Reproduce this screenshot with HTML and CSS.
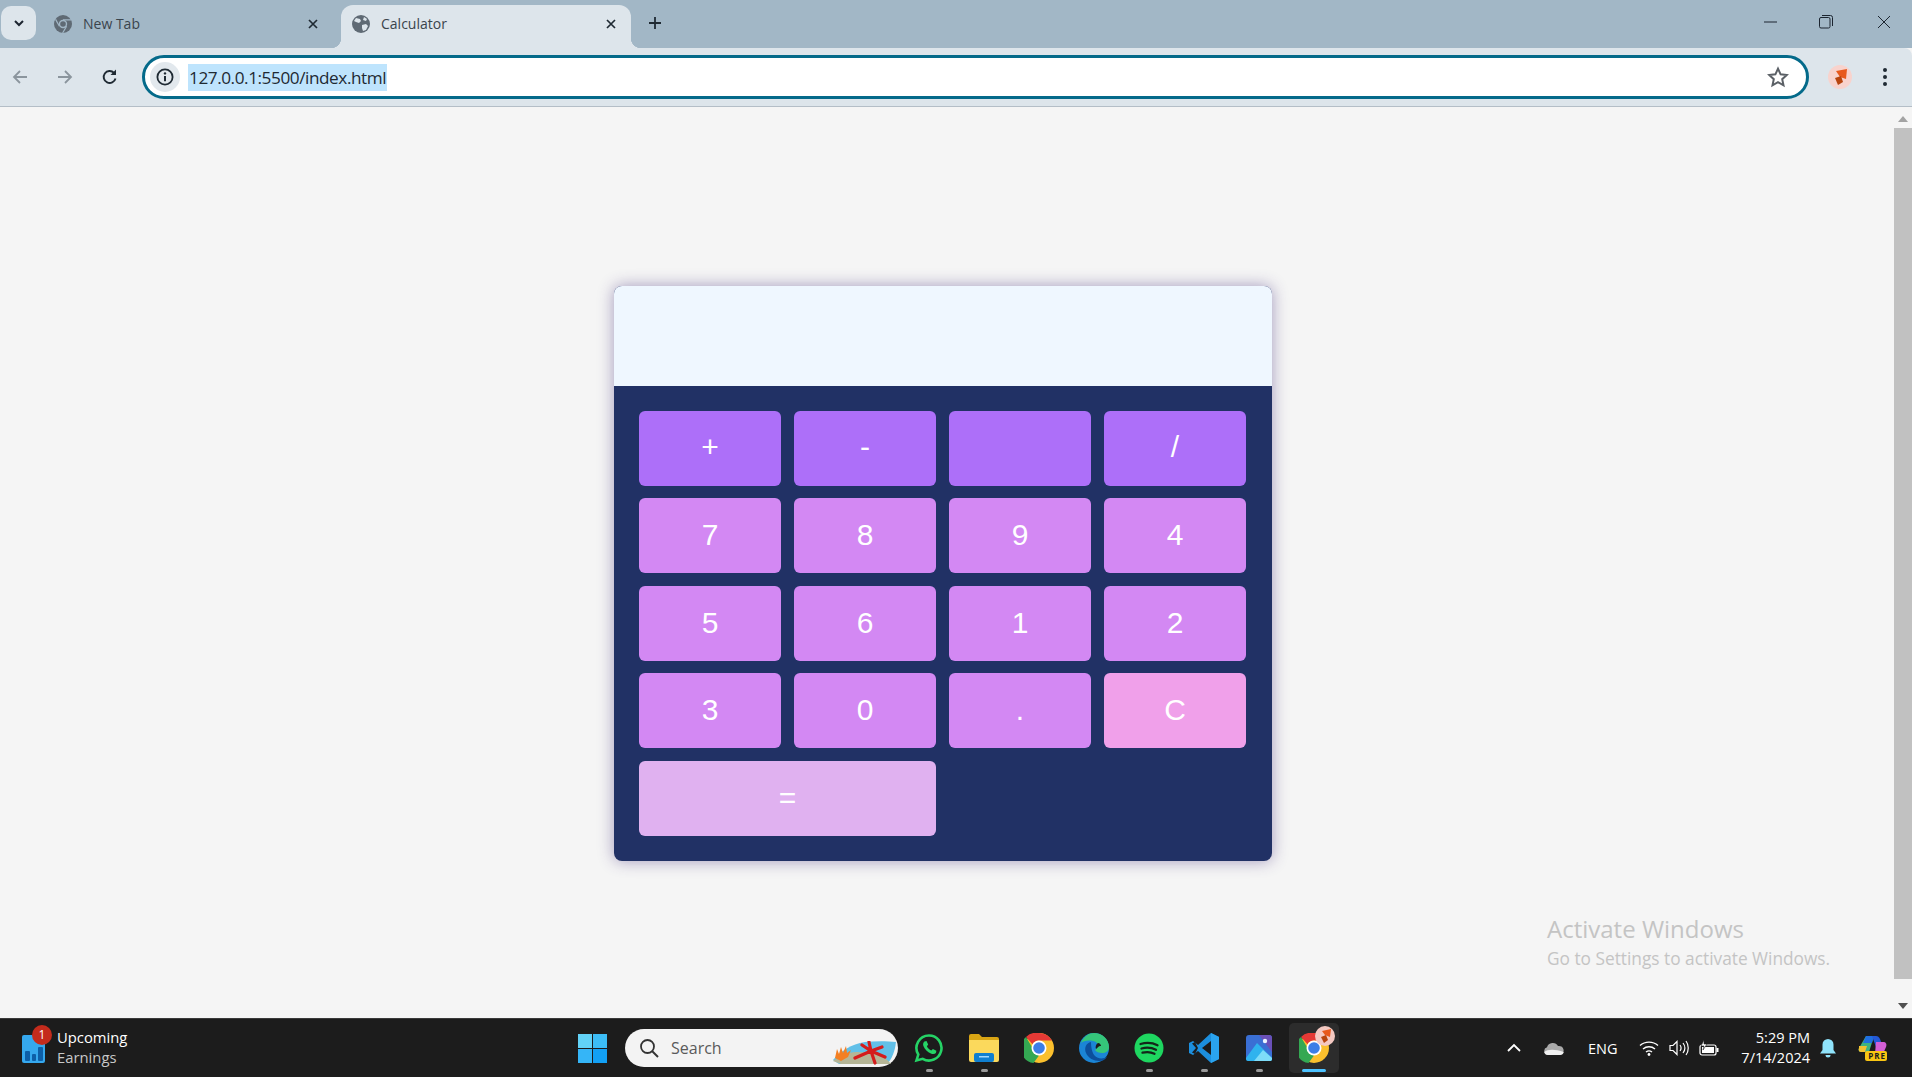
FILE: index.html
```html
<!DOCTYPE html>
<html lang="en">
<head>
    <meta charset="UTF-8">
    <meta name="viewport" content="width=device-width, initial-scale=1.0">
    <title>Calculator</title>
    <link rel="stylesheet" href="styles.css">
</head>
<body>
    <!-- Browser tabs -->
    <header class="tabstrip">
        <div class="tab-search">
            <svg width="14" height="14" viewBox="0 0 14 14"><path d="M3 5l4 4 4-4" fill="none" stroke="#1c2530" stroke-width="2"/></svg>
        </div>
        <div class="tab">
            <svg class="favicon" width="18" height="18" viewBox="0 0 18 18">
                <circle cx="9" cy="9" r="9" fill="#5f6a74"/>
                <circle cx="9" cy="9" r="4.2" fill="#a2b7c6"/>
                <circle cx="9" cy="9" r="2.8" fill="#5f6a74"/>
                <path d="M9 4.8h8M5.4 11.2L1.6 4.4M12.6 11.2L8.6 18" stroke="#a2b7c6" stroke-width="1.2"/>
            </svg>
            <span class="tab-title">New Tab</span>
            <svg class="tab-close" width="12" height="12" viewBox="0 0 12 12"><path d="M2 2l8 8M10 2l-8 8" stroke="#1f2a33" stroke-width="1.7"/></svg>
        </div>
        <div class="tab tab-active">
            <svg class="favicon" width="18" height="18" viewBox="0 0 18 18">
                <circle cx="9" cy="9" r="9" fill="#5f6a74"/>
                <path d="M4 3l4 1 1 2-2 2-3-1-2-1zM10 10l4-1 2 2-2 4-3 1-1-3zM12 2l3 2-1 2-3-1z" fill="#dde5eb"/>
            </svg>
            <span class="tab-title">Calculator</span>
            <svg class="tab-close" width="12" height="12" viewBox="0 0 12 12"><path d="M2 2l8 8M10 2l-8 8" stroke="#1f2a33" stroke-width="1.7"/></svg>
        </div>
        <svg class="new-tab" width="14" height="14" viewBox="0 0 14 14"><path d="M7 1v12M1 7h12" stroke="#1f2a33" stroke-width="1.8"/></svg>
        <div class="window-controls">
            <svg width="14" height="14" viewBox="0 0 14 14"><path d="M0 7h13" stroke="#1c2530" stroke-width="1"/></svg>
            <svg class="win-restore" width="14" height="14" viewBox="0 0 14 14"><rect x="0.5" y="2.5" width="10.5" height="10.5" rx="1.5" fill="none" stroke="#1c2530"/><path d="M3 .5h8.5a2 2 0 0 1 2 2V11" fill="none" stroke="#1c2530"/></svg>
            <svg class="win-close" width="14" height="14" viewBox="0 0 14 14"><path d="M1 1l12 12M13 1L1 13" stroke="#1c2530" stroke-width="1"/></svg>
        </div>
    </header>

    <!-- Address bar -->
    <nav class="toolbar">
        <svg class="nav-icon" width="18" height="18" viewBox="0 0 18 18"><path d="M16 9H3M9 3L3 9l6 6" fill="none" stroke="#8b959d" stroke-width="1.8"/></svg>
        <svg class="nav-icon" width="18" height="18" viewBox="0 0 18 18"><path d="M2 9h13M9 3l6 6-6 6" fill="none" stroke="#8b959d" stroke-width="1.8"/></svg>
        <svg class="nav-icon" width="18" height="18" viewBox="0 0 18 18"><path d="M14.5 10.5A6 6 0 1 1 13 4.8" fill="none" stroke="#1f2a33" stroke-width="1.9"/><path d="M15 1.5V7H9.5z" fill="#1f2a33"/></svg>
        <div class="omnibox">
            <div class="site-info">
                <svg width="18" height="18" viewBox="0 0 18 18"><circle cx="9" cy="9" r="7.6" fill="none" stroke="#1f2a33" stroke-width="1.8"/><path d="M9 8v5.2" stroke="#1f2a33" stroke-width="2"/><circle cx="9" cy="5.4" r="1.2" fill="#1f2a33"/></svg>
            </div>
            <span class="url">127.0.0.1:5500/index.html</span>
            <svg class="star" width="22" height="22" viewBox="0 0 22 22"><path d="M11 2.6l2.6 5.7 6.2.7-4.6 4.2 1.3 6.1-5.5-3.1-5.5 3.1 1.3-6.1L2.2 9l6.2-.7z" fill="none" stroke="#5b6066" stroke-width="2"/></svg>
        </div>
        <svg class="avatar" width="24" height="24" viewBox="0 0 24 24">
            <circle cx="12" cy="12" r="12" fill="#f8d3cd"/>
            <path d="M8 6l11-2-1 10-6-2z" fill="#e8591c"/>
            <path d="M7 13l6-2 2 6-5 3z" fill="#b8450f"/>
        </svg>
        <svg class="menu-dots" width="6" height="20" viewBox="0 0 6 20"><circle cx="3" cy="3" r="2" fill="#1f2a33"/><circle cx="3" cy="10" r="2" fill="#1f2a33"/><circle cx="3" cy="17" r="2" fill="#1f2a33"/></svg>
    </nav>

    <!-- Page -->
    <div class="viewport">
        <main class="page">
            <div class="calculator">
                <div class="display"></div>
                <div class="keys">
                    <button class="key key-op">+</button>
                    <button class="key key-op">-</button>
                    <button class="key key-op"></button>
                    <button class="key key-op">/</button>
                    <button class="key">7</button>
                    <button class="key">8</button>
                    <button class="key">9</button>
                    <button class="key">4</button>
                    <button class="key">5</button>
                    <button class="key">6</button>
                    <button class="key">1</button>
                    <button class="key">2</button>
                    <button class="key">3</button>
                    <button class="key">0</button>
                    <button class="key">.</button>
                    <button class="key key-clear">C</button>
                    <button class="key key-equals">=</button>
                </div>
            </div>
            <div class="watermark">
                <div class="watermark-title">Activate Windows</div>
                <div class="watermark-text">Go to Settings to activate Windows.</div>
            </div>
        </main>
        <div class="scrollbar">
            <svg width="10" height="6" viewBox="0 0 10 6"><path d="M5 0l5 6H0z" fill="#a3a3a3"/></svg>
            <div class="scroll-thumb"></div>
            <svg width="10" height="6" viewBox="0 0 10 6"><path d="M0 0h10L5 6z" fill="#505050"/></svg>
        </div>
    </div>

    <!-- Taskbar -->
    <footer class="taskbar">
        <div class="widget">
            <div class="widget-icon">
                <svg width="23" height="29" viewBox="0 0 23 29">
                    <rect width="23" height="28" y="1" rx="2" fill="#35a8ee"/>
                    <rect x="3" y="17" width="5" height="10" rx="1" fill="#0d5fa8"/>
                    <rect x="10" y="20" width="4" height="7" rx="1" fill="#0d5fa8"/>
                    <rect x="16" y="13" width="5" height="14" rx="1" fill="#0d5fa8"/>
                </svg>
                <span class="badge">1</span>
            </div>
            <div class="widget-text">
                <div class="widget-title">Upcoming</div>
                <div class="widget-sub">Earnings</div>
            </div>
        </div>

        <svg class="start" width="29" height="29" viewBox="0 0 29 29">
            <rect width="14" height="14" fill="#62d2f7"/>
            <rect x="15" width="14" height="14" fill="#3cbdf6"/>
            <rect y="15" width="14" height="14" fill="#35b5f7"/>
            <rect x="15" y="15" width="14" height="14" fill="#12a0f5"/>
        </svg>

        <div class="search">
            <svg width="20" height="20" viewBox="0 0 20 20"><circle cx="8.5" cy="8.5" r="6.5" fill="none" stroke="#333" stroke-width="1.8"/><path d="M13 13l6 6" stroke="#333" stroke-width="2"/></svg>
            <span class="search-label">Search</span>
            <svg class="search-art" width="64" height="24" viewBox="0 0 64 24">
                <path d="M0 19C8 10 18 3 32 1c10-1 22-1 31 0-1 9-4 17-9 22H6z" fill="#62c0e8"/>
                <path d="M0 20c6-5 14-9 24-9 14 0 28 3 34 12H8z" fill="#b5b596"/>
                <path d="M2 17l2-9 2 5 2-7 2 6 3-7 1 7 4-3-3 7-7 4z" fill="#f47f22"/>
                <path d="M38 10L36 1M38 10l11-4M38 10L22 17M38 10l14 6M38 10l4 12M38 10l-9-6" stroke="#d41c1c" stroke-width="3.200" stroke-linecap="round"/>
            </svg>
        </div>

        <div class="apps">
            <div class="app app-open">
                <svg width="30" height="30" viewBox="0 0 30 30">
                    <path d="M15 2.500a12.500 12.500 0 0 0-10.700 19L2.500 27.500l6.200-1.700A12.500 12.500 0 1 0 15 2.500z" fill="none" stroke="#25d366" stroke-width="2.600"/>
                    <path d="M10.500 8.500l2-.5 1.700 3.600-1.300 1.600c1 2 2.400 3.300 4.400 4.300l1.600-1.400 3.500 1.700-.5 2.200c-1 1.100-3 1.400-5 .5-3.500-1.500-6-4-7.500-7.500-.7-2-.2-3.700 1.600-5z" fill="#25d366"/>
                </svg>
            </div>
            <div class="app app-open">
                <svg width="30" height="30" viewBox="0 0 30 30">
                    <path d="M0 3a2 2 0 0 1 2-2h8l3 3h15a2 2 0 0 1 2 2v4H0z" fill="#d9a514"/>
                    <path d="M0 7h30v20a2 2 0 0 1-2 2H2a2 2 0 0 1-2-2z" fill="#fbd95c"/>
                    <rect x="5" y="20" width="20" height="9" rx="2" fill="#0f7fd0"/>
                    <rect x="10" y="23" width="10" height="1.500" fill="#9fd8ff"/>
                </svg>
            </div>
            <div class="app">
                <svg class="chrome" width="30" height="30" viewBox="0 0 30 30">
                    <circle cx="15" cy="15" r="15" fill="#fbc02d"/>
                    <path d="M15 0a15 15 0 0 1 13 7.500H15a7.500 7.500 0 0 0-6.500 3.750L2 3.900A15 15 0 0 1 15 0z" fill="#e53935"/>
                    <path d="M2 3.900l6.500 11.100a7.500 7.500 0 0 0 6.500 7.500L9.500 30A15 15 0 0 1 2 3.900z" fill="#34a853"/>
                    <circle cx="15" cy="15" r="7.500" fill="#fff"/>
                    <circle cx="15" cy="15" r="5.800" fill="#3c7ee6"/>
                </svg>
            </div>
            <div class="app">
                <svg width="30" height="30" viewBox="0 0 30 30">
                    <circle cx="15" cy="15" r="15" fill="#1b85d6"/>
                    <path d="M2 10C5 3 10 0 15 0c8 0 15 6 15 14 0 4-3 6-7 6-3 0-6-1-7-3 4-2 4-8-2-9C9 7 4 8 2 10z" fill="#35c67a"/>
                    <path d="M12 9c-5 1-7 6-5 11 2 5 8 8 13 8 3 0 6-1 8-4-4 2-9 2-12-1-3-3-4-9-4-14z" fill="#0c4f9c"/>
                    <path d="M17 16c-1-2 0-5 2-6 2 0 3 2 3 3-2-.5-3 1-5 3z" fill="#1c1c1c"/>
                </svg>
            </div>
            <div class="app app-open">
                <svg width="30" height="30" viewBox="0 0 30 30">
                    <circle cx="15" cy="15" r="14.500" fill="#1ed760"/>
                    <path d="M6.500 11c6-1.700 12-1.300 17 1.200M7.500 15.500c5-1.300 10-1 14.500 1.300M8.500 19.700c4.300-1 8.500-.7 12 1.100" fill="none" stroke="#14261a" stroke-width="2.300" stroke-linecap="round"/>
                </svg>
            </div>
            <div class="app app-open">
                <svg width="30" height="30" viewBox="0 0 30 30">
                    <path d="M22 0l8 4v22l-8 4-13-12-5 4-4-2v-10l4-2 5 4z" fill="#1c8fde"/>
                    <path d="M22 8l-9 7 9 7z" fill="#1c1c1c"/>
                    <path d="M22 0l8 4v22l-8 4z" fill="#2aa3ee"/>
                    <path d="M3 10.500l3-1.500 3 6-3 6-3-1.500 4-4.500z" fill="#1c1c1c"/>
                </svg>
            </div>
            <div class="app app-open">
                <svg width="28" height="28" viewBox="0 0 28 28">
                    <rect width="26" height="26" x="1" y="1" rx="3" fill="#3a6fd4"/>
                    <path d="M14 1h10a3 3 0 0 1 3 3v14z" fill="#6a50b8"/>
                    <path d="M1 24l11-15 15 15v1a2 2 0 0 1-2 2H3a2 2 0 0 1-2-2z" fill="#2fb3ee"/>
                    <path d="M9 27l9-11 9 8v1a2 2 0 0 1-2 2z" fill="#7edcf8"/>
                    <circle cx="20" cy="7" r="2.200" fill="#eaf4ff"/>
                </svg>
            </div>
            <div class="app app-active">
                <svg class="chrome" width="30" height="30" viewBox="0 0 30 30">
                    <circle cx="15" cy="15" r="15" fill="#fbc02d"/>
                    <path d="M15 0a15 15 0 0 1 13 7.500H15a7.500 7.500 0 0 0-6.500 3.750L2 3.900A15 15 0 0 1 15 0z" fill="#e53935"/>
                    <path d="M2 3.900l6.500 11.100a7.500 7.500 0 0 0 6.500 7.500L9.500 30A15 15 0 0 1 2 3.900z" fill="#34a853"/>
                    <circle cx="15" cy="15" r="7.500" fill="#fff"/>
                    <circle cx="15" cy="15" r="5.800" fill="#3c7ee6"/>
                </svg>
                <svg class="app-overlay" width="20" height="20" viewBox="0 0 20 20">
                    <circle cx="10" cy="10" r="10" fill="#f4c9c2"/>
                    <path d="M7 5l9-2-1 8-5-2z" fill="#e8591c"/>
                    <path d="M6 11l5-2 2 5-4 3z" fill="#b8450f"/>
                </svg>
            </div>
        </div>

        <div class="tray">
            <svg class="tray-chevron" width="14" height="14" viewBox="0 0 14 14"><path d="M1 10l6-6 6 6" fill="none" stroke="#fff" stroke-width="1.800"/></svg>
            <svg class="tray-cloud" width="20" height="13" viewBox="0 0 20 13"><path d="M4 13a4 4 0 0 1-1-7.800A6 6 0 0 1 14 4a4.500 4.500 0 0 1 2 9z" fill="#a9a9a9"/><path d="M4 13a4 4 0 0 1-3.800-3C4 7 11 7 19.800 10a4 4 0 0 1-3.800 3z" fill="#f0f0f0"/></svg>
            <span class="tray-lang">ENG</span>
            <svg class="tray-wifi" width="20" height="16" viewBox="0 0 20 16"><path d="M1 5.500c5-4.500 13-4.500 18 0M4 9c3.500-3 8.500-3 12 0M7 12c1.700-1.300 4.300-1.300 6 0" fill="none" stroke="#fff" stroke-width="1.400"/><circle cx="10" cy="14.500" r="1.400" fill="#fff"/></svg>
            <svg class="tray-volume" width="20" height="16" viewBox="0 0 20 16"><path d="M1 5.500h3l4-4v13l-4-4H1z" fill="none" stroke="#fff" stroke-width="1.200"/><path d="M11 5c1.300 1.800 1.300 4.200 0 6M14 3c2.300 3 2.300 7 0 10M17 1c3 4 3 10 0 14" fill="none" stroke="#fff" stroke-width="1.200"/></svg>
            <svg class="tray-battery" width="20" height="16" viewBox="0 0 20 16"><rect x="1" y="5" width="16" height="10" rx="2" fill="#1c1c1c" stroke="#fff" stroke-width="1.200"/><rect x="3" y="7" width="12" height="6" fill="#fff"/><rect x="17.500" y="8" width="2" height="4" fill="#fff"/><path d="M5 0L2 6h3l-1 4 4-6H5z" fill="#fff" stroke="#1c1c1c" stroke-width=".6"/></svg>
            <div class="clock">
                <div>5:29 PM</div>
                <div>7/14/2024</div>
            </div>
            <svg class="tray-bell" width="16" height="19" viewBox="0 0 16 19"><path d="M8 0a5.500 5.500 0 0 0-5.500 5.500V11L0 14.500h16L13.500 11V5.500A5.500 5.500 0 0 0 8 0z" fill="#8fe3fb"/><path d="M5.500 16h5a2.500 2.500 0 0 1-5 0z" fill="#8fe3fb"/></svg>
            <div class="copilot">
                <svg width="29" height="26" viewBox="0 0 29 26">
                    <path d="M8 1h8L11 17H3C1 17 0 15 1 13z" fill="#3fb37f"/>
                    <path d="M8 1h8l-2 7H5z" fill="#1f6fe0"/>
                    <path d="M14 1h4c2 0 3 1 4 3l3 8h-7z" fill="#2459d8"/>
                    <path d="M18 7h7c3 0 4 2 3 5l-3 7h-8z" fill="#d35fd6"/>
                    <path d="M1 11h8l-2 6H3c-2 0-3-2-2-4z" fill="#f2c230"/>
                    <rect x="7" y="16" width="22" height="10" rx="2" fill="#f9c513"/>
                </svg>
                <span class="copilot-tag">PRE</span>
            </div>
        </div>
    </footer>
</body>
</html>
```

FILE: styles.css
```css
/* Window */
body {
    margin: 0;
    width: 1912px;
    height: 1077px;
    overflow: hidden;
    display: flex;
    flex-direction: column;
    font-family: "Open Sans", "Noto Sans", sans-serif;
    background-color: #f5f5f5;
}

svg {
    display: block;
    flex-shrink: 0;
}

/* Tab strip */
.tabstrip {
    height: 48px;
    flex-shrink: 0;
    display: flex;
    align-items: center;
    background-color: #a2b7c6;
}

.tab-search {
    width: 35px;
    height: 34px;
    margin-left: 1px;
    margin-bottom: 2px;
    border-radius: 10px;
    display: flex;
    align-items: center;
    justify-content: center;
    background-color: #dde5eb;
}

.tab {
    width: 305px;
    height: 43px;
    align-self: flex-end;
    display: flex;
    align-items: center;
    box-sizing: border-box;
    padding: 0 22px 5px 18px;
    font-size: 14px;
    color: #3a444c;
}

.tab-title {
    flex: 1;
    margin-bottom: 2px;
}

.tab-active {
    width: 290px;
    padding: 0 14px 5px 11px;
    border-radius: 12px 12px 0 0;
    background-color: #dde5eb;
    position: relative;
}

.tab-active::before,
.tab-active::after {
    content: "";
    position: absolute;
    bottom: 0;
    width: 10px;
    height: 10px;
}

.tab-active::before {
    left: -10px;
    background: radial-gradient(circle at 0 0, #a2b7c6 10px, #dde5eb 10.5px);
}

.tab-active::after {
    right: -10px;
    background: radial-gradient(circle at 100% 0, #a2b7c6 10px, #dde5eb 10.5px);
}

.favicon {
    margin-right: 11px;
}

.new-tab {
    margin-left: 17px;
    margin-bottom: 2px;
}

.window-controls {
    margin-left: auto;
    display: flex;
    padding-right: 21px;
    margin-bottom: 4px;
}

.win-restore {
    margin-left: 41px;
}

.win-close {
    margin-left: 44px;
}

/* Toolbar */
.toolbar {
    height: 58px;
    flex-shrink: 0;
    display: flex;
    align-items: center;
    padding: 0 0 0 11px;
    border-bottom: 1px solid #b4bec7;
    border-top-right-radius: 8px;
    background-color: #dde5eb;
}

.nav-icon {
    margin-right: 27px;
}

.nav-icon:nth-child(3) {
    margin-right: 23px;
}

.omnibox {
    width: 1667px;
    height: 44px;
    box-sizing: border-box;
    display: flex;
    align-items: center;
    padding: 0 17px 0 5px;
    border: 3px solid #046a8a;
    border-radius: 22px;
    background-color: #fff;
}

.site-info {
    width: 30px;
    height: 30px;
    border-radius: 50%;
    display: flex;
    align-items: center;
    justify-content: center;
    margin-right: 8px;
    background-color: #e2e8ed;
}

.url {
    height: 27px;
    line-height: 27px;
    padding: 0 1px;
    font-size: 17.2px;
    letter-spacing: -0.44px;
    color: #1f2a33;
    background-color: #bee4fd;
}

.star {
    margin-left: auto;
}

.avatar {
    margin-left: 19px;
}

.menu-dots {
    margin-left: 30px;
}

/* Page area */
.viewport {
    flex: 1;
    min-height: 0;
    display: flex;
}

.page {
    flex: 1;
    position: relative;
    padding: 179px 0 0 614px;
}

.scrollbar {
    width: 18px;
    display: flex;
    flex-direction: column;
    align-items: center;
    padding-top: 9px;
    box-sizing: border-box;
}

.scroll-thumb {
    width: 18px;
    height: 851px;
    margin: 6px 0 24px;
    background-color: #c1c1c1;
}

/* Calculator */
.calculator {
    width: 658px;
    height: 575px;
    border-radius: 8px;
    overflow: hidden;
    box-shadow: 0 0 16px rgba(60, 40, 120, 0.45);
    background-color: #213165;
}

.display {
    height: 100px;
    border-radius: 6px 6px 0 0;
    background-color: #eff7ff;
}

.keys {
    display: grid;
    grid-template-columns: repeat(4, 142px);
    grid-auto-rows: 75px;
    gap: 12.4px 13px;
    padding: 25px;
}

.key {
    border: none;
    border-radius: 6px;
    padding: 0 0 1px;
    font-family: "Liberation Sans", Arial, sans-serif;
    font-size: 30px;
    color: #fff;
    background-color: #d388f3;
}

.key-op {
    padding-bottom: 3px;
    background-color: #ad6ff9;
}

.key-clear {
    background-color: #f0a0ea;
}

.key-equals {
    grid-column: span 2;
    background-color: #e0b1f0;
}

/* Activate Windows note */
.watermark {
    position: absolute;
    left: 1547px;
    top: 806px;
    color: #c4c4c4;
}

.watermark-title {
    font-size: 24px;
    line-height: 32px;
}

.watermark-text {
    font-size: 17.3px;
    line-height: 27px;
}

/* Taskbar */
.taskbar {
    height: 59px;
    flex-shrink: 0;
    box-sizing: border-box;
    display: flex;
    align-items: center;
    border-top: 1px solid #3a3a3a;
    background-color: #1c1c1c;
    color: #fff;
}

.widget {
    width: 578px;
    display: flex;
    align-items: center;
    padding-left: 22px;
    box-sizing: border-box;
}

.widget-icon {
    position: relative;
    margin-right: 12px;
}

.badge {
    position: absolute;
    left: 10px;
    top: -9px;
    width: 20px;
    height: 20px;
    border-radius: 50%;
    text-align: center;
    font-size: 12px;
    line-height: 20px;
    background-color: #c42b1c;
}

.widget-text {
    margin-top: -2px;
}

.widget-title {
    font-size: 14.8px;
    line-height: 20px;
}

.widget-sub {
    font-size: 14.8px;
    line-height: 20px;
    color: #c8c8c8;
}

.start {
    margin-right: 18px;
}

.search {
    width: 273px;
    height: 38px;
    box-sizing: border-box;
    display: flex;
    align-items: center;
    padding: 0 1px 0 14px;
    border-radius: 19px;
    background-color: #f3f3f3;
}

.search-label {
    margin-left: 12px;
    font-size: 16px;
    color: #5a5a5a;
}

.search-art {
    margin: 10px 0 0 auto;
}

.apps {
    margin-left: 3.5px;
    display: flex;
}

.app {
    width: 55px;
    height: 50px;
    display: flex;
    align-items: center;
    justify-content: center;
    position: relative;
}

.app-open::after,
.app-active::after {
    content: "";
    position: absolute;
    bottom: 1px;
    left: 24px;
    width: 7px;
    height: 3px;
    border-radius: 2px;
    background-color: #9a9a9a;
}

.app-active {
    width: 50px;
    margin-left: 2.5px;
    border-radius: 5px;
    background-color: #2c2c2c;
}

.app-active::after {
    left: 13px;
    width: 24px;
    background-color: #4cc2ff;
}

.app-overlay {
    position: absolute;
    right: 4px;
    top: 3px;
}

/* System tray */
.tray {
    flex: 1;
    display: flex;
    align-items: center;
    padding-left: 168px;
    font-size: 14.5px;
}

.tray-cloud {
    margin-left: 23px;
}

.tray-lang {
    margin-left: 24px;
}

.tray-wifi {
    margin-left: 21.5px;
}

.tray-volume {
    margin-left: 10px;
}

.tray-battery {
    margin-left: 10px;
}

.clock {
    width: 90px;
    margin-left: 1px;
    text-align: right;
    line-height: 20px;
}

.tray-bell {
    margin-left: 10px;
}

.copilot {
    position: relative;
    margin-left: 22px;
}

.copilot-tag {
    position: absolute;
    right: 1px;
    bottom: 0;
    font-size: 8px;
    line-height: 10px;
    font-weight: 700;
    letter-spacing: 1px;
    color: #1c1c1c;
}
```
